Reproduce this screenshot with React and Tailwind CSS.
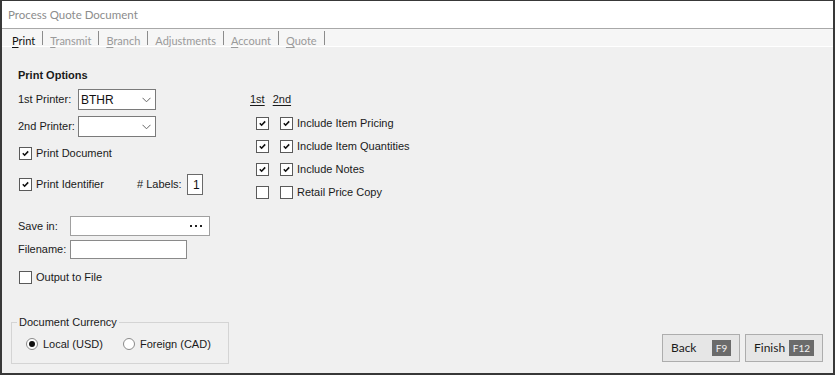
import React from "react";

const ui = { fontFamily: 'Lato, "Noto Sans", sans-serif' };
const form = { fontFamily: '"Liberation Sans", Arial, sans-serif' };

const CheckBox = ({ checked }) => (
  <span className="w-[13px] h-[13px] shrink-0 border border-[#5a5a5a] bg-white flex items-center justify-center">
    {checked && (
      <svg width="7" height="7" viewBox="0 0 7 7">
        <path d="M0.8 3.3 L2.6 5.2 L6.2 1.4" fill="none" stroke="#111" strokeWidth="1.6" />
      </svg>
    )}
  </span>
);

const Radio = ({ checked }) => (
  <span className="w-[12px] h-[12px] shrink-0 rounded-full border border-[#8a8a8a] bg-white flex items-center justify-center">
    {checked && <span className="w-[6px] h-[6px] rounded-full bg-[#111]" />}
  </span>
);

const CheckRow = ({ checked, label, className = "" }) => (
  <div className={`flex items-center h-[14px] pl-px ${className}`}>
    <CheckBox checked={checked} />
    <span className="ml-[4px] text-[11px] text-[#1a1a1a]">{label}</span>
  </div>
);

const Dropdown = ({ value }) => (
  <div className="w-[78px] h-[21px] border border-[#7a7a7a] bg-white flex items-center justify-between pl-[2px] pr-[4px]">
    <span className="text-[12px] text-[#111]">{value}</span>
    <svg width="9" height="6" viewBox="0 0 9 6">
      <path d="M0.5 0.8 L4.5 4.8 L8.5 0.8" fill="none" stroke="#666" strokeWidth="1" />
    </svg>
  </div>
);

const tabs = [
  { first: "P", rest: "rint", active: true },
  { first: "T", rest: "ransmit" },
  { first: "B", rest: "ranch" },
  { first: "", rest: "Adjustments" },
  { first: "A", rest: "ccount" },
  { first: "Q", rest: "uote" },
];

const OptionRow = ({ a, b, label }) => (
  <div className="flex items-center h-[23px]">
    <span className="ml-[6px]"><CheckBox checked={a} /></span>
    <span className="ml-[11px]"><CheckBox checked={b} /></span>
    <span className="ml-[4px] text-[11px] text-[#1a1a1a]">{label}</span>
  </div>
);

const KeyButton = ({ label, keyName, badgeW }) => (
  <button className="w-[78px] h-[28px] border border-[#adadad] bg-[#e6e6e6] flex items-center justify-between pl-[8px] pr-[8px]" style={ui}>
    <span className="text-[12px] text-[#1a1a1a]">{label}</span>
    <span className={`${badgeW} h-[16px] bg-[#6b6b6b] text-[#f2f2f2] text-[10px] flex items-center justify-center`}>{keyName}</span>
  </button>
);

export default function App() {
  return (
    <div className="w-[835px] h-[375px] bg-[#f0f0f0] border-x-2 border-b-2 border-t border-[#383838] flex flex-col overflow-hidden">
      {/* Title */}
      <div className="h-[28px] bg-white flex items-center pl-[6px] pt-[1px] border-b border-[#a8a8a8]" style={ui}>
        <span className="text-[11.5px] text-[#8c8c8c]">Process Quote Document</span>
      </div>

      {/* Tabs */}
      <div className="h-[18px] bg-[#f6f6f6] border-b border-white flex items-start pl-[10px]" style={ui}>
        {tabs.map((t, i) => (
          <React.Fragment key={i}>
            <span className={`mt-[5px] text-[11px] leading-[14px] ${t.active ? "text-[#111]" : "text-[#9a9a9a]"}`}>
              <span className="underline underline-offset-2">{t.first}</span>
              {t.rest}
            </span>
            <span className="mt-[2px] w-px h-[14px] bg-[#8c8c8c] mx-[7px]" />
          </React.Fragment>
        ))}
      </div>

      {/* Content */}
      <div className="flex-1 flex flex-col" style={form}>
        <div className="flex pl-[16px] pt-[21px]">
          {/* Left column */}
          <div className="w-[232px] flex flex-col">
            <div className="h-[14px] flex items-center text-[11px] font-bold text-[#1a1a1a]">Print Options</div>

            <div className="flex items-center mt-[7px]">
              <span className="w-[60px] text-[11px] text-[#1a1a1a]">1st Printer:</span>
              <Dropdown value="BTHR" />
            </div>
            <div className="flex items-center mt-[6px]">
              <span className="w-[60px] text-[11px] text-[#1a1a1a]">2nd Printer:</span>
              <Dropdown value="" />
            </div>

            <CheckRow checked label="Print Document" className="mt-[9px]" />

            <div className="flex items-center mt-[14px] h-[21px]">
              <div className="w-[119px] flex items-center pl-px">
                <CheckBox checked />
                <span className="ml-[4px] text-[11px] text-[#1a1a1a]">Print Identifier</span>
              </div>
              <span className="text-[11px] text-[#1a1a1a]"># Labels:</span>
              <div className="ml-[5px] w-[16px] h-[21px] border border-[#6a6a6a] bg-white flex items-center justify-end pr-[2px] text-[12px] text-[#111]">1</div>
            </div>

            <div className="flex items-center mt-[21px]">
              <span className="w-[52px] text-[11px] text-[#1a1a1a]">Save in:</span>
              <div className="w-[140px] h-[20px] border border-[#a0a0a0] bg-white flex items-center justify-end gap-[3px] pr-[7px]">
                <span className="w-[2px] h-[2px] bg-[#222]" />
                <span className="w-[2px] h-[2px] bg-[#222]" />
                <span className="w-[2px] h-[2px] bg-[#222]" />
              </div>
            </div>
            <div className="flex items-center mt-[4px]">
              <span className="w-[52px] text-[11px] text-[#1a1a1a]">Filename:</span>
              <div className="w-[117px] h-[19px] border border-[#8a8a8a] bg-white" />
            </div>

            <CheckRow label="Output to File" className="mt-[11px]" />
          </div>

          {/* Right column */}
          <div className="flex flex-col pt-[24px]">
            <div className="h-[14px] flex items-center text-[11px] text-[#1a1a1a]">
              <span className="underline underline-offset-2">1st</span>
              <span className="ml-[8px] underline underline-offset-2">2nd</span>
            </div>
            <div className="mt-[6px] flex flex-col">
              <OptionRow a b label="Include Item Pricing" />
              <OptionRow a b label="Include Item Quantities" />
              <OptionRow a b label="Include Notes" />
              <OptionRow label="Retail Price Copy" />
            </div>
          </div>
        </div>

        {/* Bottom */}
        <div className="mt-auto flex items-end justify-between pl-[9px] pr-[10px] pb-[9px]">
          <fieldset className="w-[218px] h-[48px] border border-[#d4d4d4] pl-[5px] flex items-center">
            <legend className="px-[2px] text-[11px] text-[#1a1a1a] leading-[13px]">Document Currency</legend>
            <div className="flex items-center -mt-[4px] ml-[9px]">
              <Radio checked />
              <span className="ml-[5px] text-[11px] text-[#1a1a1a]">Local (USD)</span>
              <span className="ml-[20px]"><Radio /></span>
              <span className="ml-[5px] text-[11px] text-[#1a1a1a]">Foreign (CAD)</span>
            </div>
          </fieldset>
          <div className="flex gap-[5px] mb-[2px]">
            <KeyButton label="Back" keyName="F9" badgeW="w-[19px]" />
            <KeyButton label="Finish" keyName="F12" badgeW="w-[25px]" />
          </div>
        </div>
      </div>
    </div>
  );
}
